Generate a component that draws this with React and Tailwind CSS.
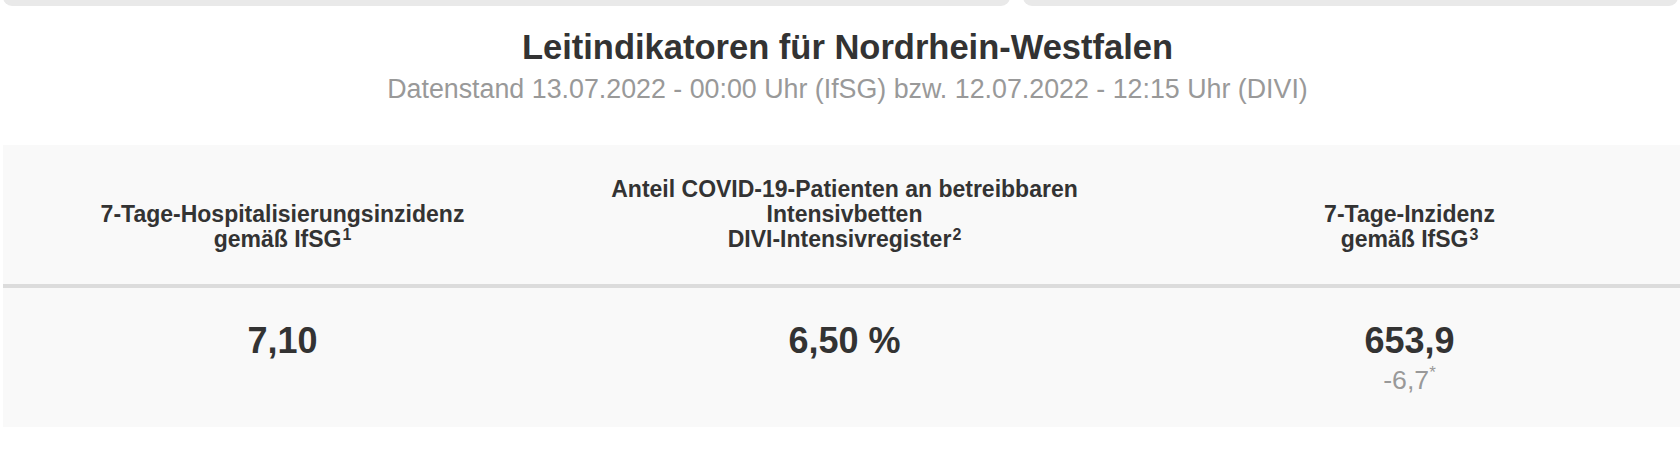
import React from "react";

function Cell({ children }) {
  return <div className="flex flex-col items-center text-center">{children}</div>;
}

export default function App() {
  return (
    <div className="w-[1680px] h-[458px] overflow-hidden bg-white font-['Liberation_Sans',Arial,Helvetica,sans-serif] text-[#333333]">
      <div className="w-[1689px] ml-[3px]">
        {/* top tab bars */}
        <div className="flex gap-[13px] h-[6px] overflow-hidden">
          <div className="w-[1007px] h-[20px] -mt-[14px] bg-[#e9e9e9] rounded-b-[9px]" />
          <div className="w-[655px] h-[20px] -mt-[14px] bg-[#e9e9e9] rounded-b-[9px]" />
        </div>

        {/* heading */}
        <div className="flex flex-col items-center pt-[21px]">
          <h2 className="text-[34.5px] leading-[40px] font-bold">Leitindikatoren für Nordrhein-Westfalen</h2>
          <p className="mt-[6px] text-[26.8px] leading-[32px] text-[#999999]">
            Datenstand 13.07.2022 - 00:00 Uhr (IfSG) bzw. 12.07.2022 - 12:15 Uhr (DIVI)
          </p>
        </div>

        {/* table */}
        <div className="mt-[40px] bg-[#f9f9f9]">
          <div className="grid grid-cols-[559px_565px_565px] h-[139px] text-[23px] leading-[25px] font-bold">
            <div className="flex items-end justify-center pb-[32px]">
              <Cell>
                <span>7-Tage-Hospitalisierungsinzidenz</span>
                <span>
                  gemäß IfSG<sup className="text-[16px] leading-none -top-[7px] ml-[1px]">1</sup>
                </span>
              </Cell>
            </div>
            <div className="flex items-end justify-center pb-[32px]">
              <Cell>
                <span>Anteil COVID-19-Patienten an betreibbaren</span>
                <span>Intensivbetten</span>
                <span>
                  DIVI-Intensivregister<sup className="text-[16px] leading-none -top-[7px] ml-[1px]">2</sup>
                </span>
              </Cell>
            </div>
            <div className="flex items-end justify-center pb-[32px]">
              <Cell>
                <span>7-Tage-Inzidenz</span>
                <span>
                  gemäß IfSG<sup className="text-[16px] leading-none -top-[7px] ml-[1px]">3</sup>
                </span>
              </Cell>
            </div>
          </div>
          <div className="h-[4px] bg-[#dcdcdc]" />
          <div className="grid grid-cols-[559px_565px_565px] h-[139px] pt-[31px]">
            <Cell>
              <span className="text-[36px] leading-[44px] font-bold">7,10</span>
            </Cell>
            <Cell>
              <span className="text-[36px] leading-[44px] font-bold">6,50 %</span>
            </Cell>
            <Cell>
              <span className="text-[36px] leading-[44px] font-bold">653,9</span>
              <span className="text-[26.7px] leading-[34px] text-[#999999]">
                -6,7<sup className="text-[17px] leading-none -top-[11px]">*</sup>
              </span>
            </Cell>
          </div>
        </div>
      </div>
    </div>
  );
}
